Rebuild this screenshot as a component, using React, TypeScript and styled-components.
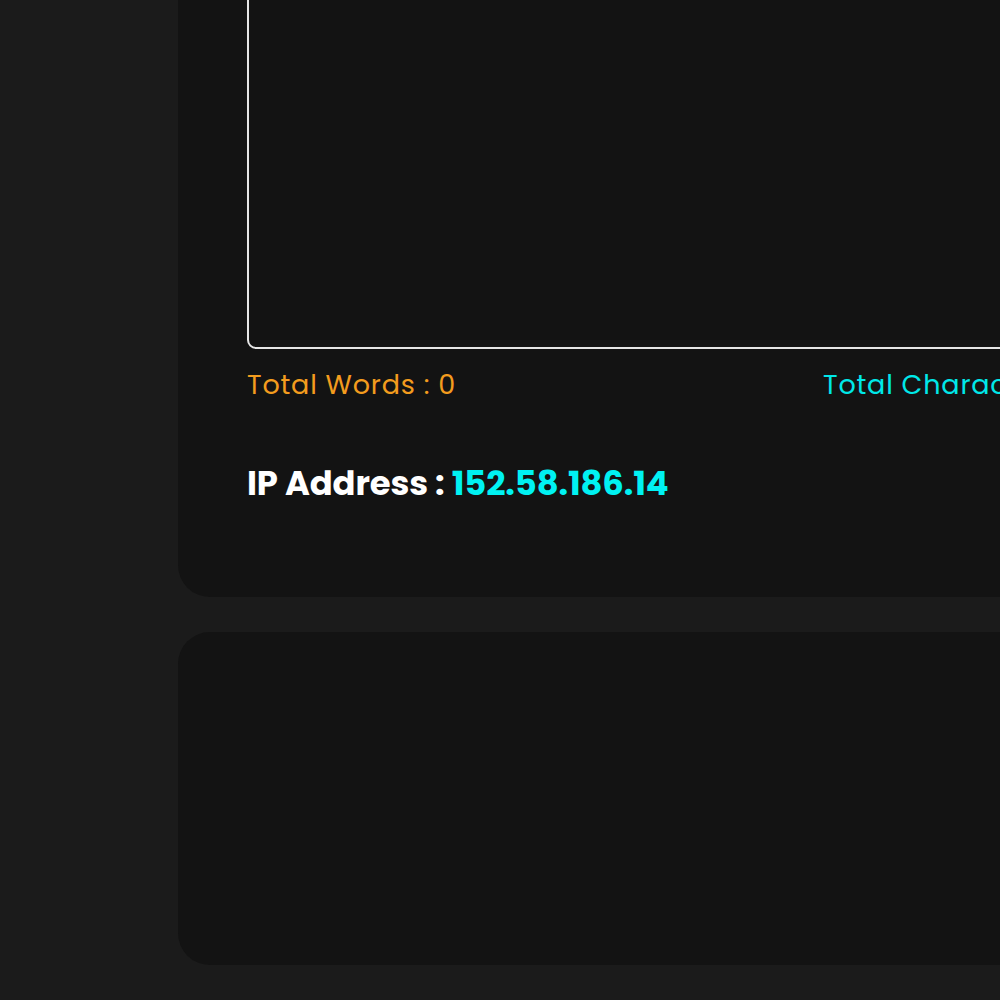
import React from "react";
import styled, { createGlobalStyle } from "styled-components";

const GlobalStyle = createGlobalStyle`
  html, body {
    margin: 0;
    padding: 0;
    background: #1b1b1b;
    overflow: hidden;
  }
  body {
    font-family: "Poppins", "Inter", "Noto Sans", sans-serif;
  }
`;

const Page = styled.main`
  display: flex;
  flex-direction: column;
  gap: 35px;
  padding-left: 178px;
  margin-top: -40px;
  width: 1400px;
  box-sizing: border-box;
`;

const Card = styled.section<{ $height: number }>`
  background: #131313;
  border-radius: 32px;
  height: ${(p) => p.$height}px;
  box-sizing: border-box;
  padding: 0 69px;
`;

const EditorCard = styled(Card)`
  display: flex;
  flex-direction: column;
`;

const TextArea = styled.textarea`
  display: block;
  width: 900px;
  height: 389px;
  box-sizing: border-box;
  background: transparent;
  border: 2px solid #e6e6e6;
  border-radius: 9px;
  resize: none;
  outline: none;
  color: #fff;
`;

const Stats = styled.div`
  display: grid;
  grid-template-columns: 576px auto;
  margin-top: 19px;
  font-size: 27px;
  line-height: 34px;
  font-weight: 400;
  letter-spacing: 0.8px;
`;

const Stat = styled.span<{ $color: string }>`
  color: ${(p) => p.$color};
  white-space: nowrap;
`;

const IpLine = styled.div`
  margin-top: 61px;
  font-size: 33.8px;
  line-height: 42px;
  font-weight: 700;
  color: #ffffff;
  white-space: nowrap;
  letter-spacing: -0.1px;
`;

const IpValue = styled.span`
  color: #00f2f2;
`;

export default function App() {
  return (
    <>
      <GlobalStyle />
      <Page>
        <EditorCard $height={637}>
          <TextArea aria-label="text" />
          <Stats>
            <Stat $color="#f39c1e">Total Words : 0</Stat>
            <Stat $color="#00e8e8">Total Characters : 0</Stat>
          </Stats>
          <IpLine>
            IP Address : <IpValue>152.58.186.14</IpValue>
          </IpLine>
        </EditorCard>
        <Card $height={333} />
      </Page>
    </>
  );
}
